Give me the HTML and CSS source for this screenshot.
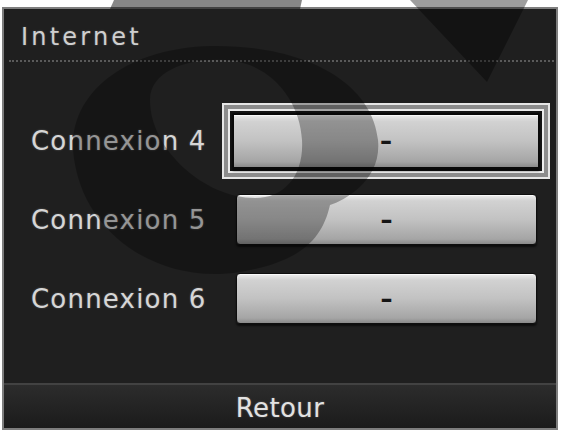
FILE: index.html
```html
<!DOCTYPE html>
<html lang="fr">
<head>
<meta charset="utf-8">
<title>Internet</title>
<link rel="stylesheet" href="styles.css">
</head>
<body>
<div class="panel">
  <header class="head">
    <h1 class="title">Internet</h1>
  </header>
  <main class="rows">
    <div class="row">
      <span class="label">Connexion 4</span>
      <div class="focus">
        <div class="focus-inner">
          <button class="btn btn-big">–</button>
        </div>
      </div>
    </div>
    <div class="row">
      <span class="label">Connexion 5</span>
      <button class="btn">–</button>
    </div>
    <div class="row">
      <span class="label">Connexion 6</span>
      <button class="btn">–</button>
    </div>
  </main>
  <footer class="foot">Retour</footer>
</div>
<svg class="watermark" width="563" height="432" viewBox="0 0 563 432" aria-hidden="true">
  <path fill-rule="evenodd" d="M73 150 C70 90 130 48 210 46 C300 44 372 80 378 140 C382 180 345 200 330 205 C322 240 300 262 240 272 C160 285 80 235 73 150 Z M150 100 C150 70 190 58 225 60 C270 62 300 100 302 140 C304 175 285 198 255 198 C205 198 150 150 150 100 Z" fill="rgba(0,0,0,0.3)"/>
  <polygon points="114,0 302,0 300,9 110,9" fill="rgba(0,0,0,0.47)"/>
  <polygon points="410,0 528,0 487,82" fill="rgba(0,0,0,0.38)"/>
</svg>
</body>
</html>
```

FILE: styles.css
```css
html, body {
  margin: 0;
  padding: 0;
  background: #ffffff;
}

body {
  width: 563px;
  height: 432px;
  position: relative;
  overflow: hidden;
  font-family: "DejaVu Sans", "Liberation Sans", sans-serif;
}

.panel {
  box-sizing: border-box;
  margin: 7px 0 0 2px;
  width: 556px;
  height: 423px;
  border: 2px solid #7e7e7e;
  background: #1f1f1f;
  display: flex;
  flex-direction: column;
}

.head {
  margin: 0 2px 0 5px;
  padding: 14px 0 0 12px;
  height: 37px;
  border-bottom: 2px dotted #5a5a5a;
}

.title {
  margin: 0;
  font-size: 24px;
  line-height: 28px;
  font-weight: normal;
  letter-spacing: 3.2px;
  color: #cfcfcf;
  text-shadow: 0 0 2px rgba(255,255,255,0.25);
}

.rows {
  flex: 1;
  padding-top: 39px;
  display: flex;
  flex-direction: column;
}

.row {
  height: 79px;
  display: flex;
  align-items: center;
  padding-left: 27px;
}

.label {
  width: 205px;
  font-size: 26px;
  letter-spacing: 1.2px;
  color: #d6d6d6;
  text-shadow: 0 0 2px rgba(255,255,255,0.3);
  white-space: nowrap;
}

.focus {
  margin-left: -14px;
  border: 2px solid #e6e6e6;
  padding: 4px;
  background: #8c8c8c;
}

.focus-inner {
  border: 2px solid #ececec;
  padding: 2px;
  background: #141414;
}

.btn {
  box-sizing: border-box;
  width: 301px;
  height: 51px;
  padding: 0;
  border: 1px solid #0e0e0e;
  border-radius: 4px;
  background: linear-gradient(#eeeeee 0%, #d2d2d2 12%, #c2c2c2 50%, #a5a5a5 90%, #8a8a8a 100%);
  box-shadow: inset 0 1px 0 rgba(255,255,255,0.7), 0 2px 2px rgba(0,0,0,0.6);
  font-family: "DejaVu Sans", sans-serif;
  font-size: 24px;
  font-weight: bold;
  line-height: 1;
  color: #151515;
}

.btn-big {
  display: block;
  width: 308px;
  height: 56px;
  border: 2px solid #0a0a0a;
  border-radius: 2px;
}

.foot {
  height: 43px;
  border-top: 2px solid #424242;
  background: linear-gradient(#2c2c2c, #222222 60%, #1b1b1b);
  text-align: center;
  font-size: 26px;
  letter-spacing: 0.4px;
  line-height: 47px;
  color: #e2e2e2;
  text-shadow: 0 0 2px rgba(255,255,255,0.3);
}

.watermark {
  position: absolute;
  left: 0;
  top: 0;
  pointer-events: none;
}
```
